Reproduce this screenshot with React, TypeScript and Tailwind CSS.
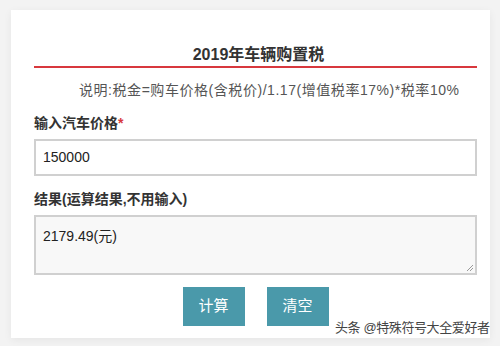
import React from "react";

export default function App() {
  const cjk = { fontFamily: '"Liberation Sans", "Noto Sans CJK SC", sans-serif' };
  return (
    <div className="relative w-[500px] h-[346px] overflow-hidden bg-[#f3f3f3] pt-[10px] pl-[11px] pr-[10px]" style={cjk}>
      <div className="w-[479px] h-[328px] bg-white shadow-[0_2px_8px_rgba(0,0,0,0.06)] pl-[23px] pr-[13px] pt-[35px]">
        <div className="border-b-2 border-[#d8383d] pb-[1px]">
          <div className="h-[20px] leading-[20px] text-center text-[16px] font-bold text-[#333] pl-[6px]">2019年车辆购置税</div>
        </div>
        <div className="mt-[12px] h-[20px] leading-[20px] pl-[45px] text-[14px] text-[#555] whitespace-nowrap tracking-[0.55px]">
          说明:税金=购车价格(含税价)/1.17(增值税率17%)*税率10%
        </div>
        <div className="mt-[13px] h-[20px] leading-[20px] text-[14px] font-bold text-[#333]">
          输入汽车价格<span className="text-[#d8383d]">*</span>
        </div>
        <div className="mt-[6px] h-[37px] border-2 border-[#d0d0d0] bg-white flex items-center pl-[7px] text-[14px] text-[#222]">
          150000
        </div>
        <div className="mt-[13px] h-[20px] leading-[20px] text-[14px] font-bold text-[#333]">
          结果(运算结果,不用输入)
        </div>
        <div className="relative mt-[6px] h-[60px] border-2 border-[#d0d0d0] bg-[#f8f8f8] pl-[7px] pt-[9px] text-[14px] leading-[20px] text-[#222]">
          2179.49(元)
          <svg className="absolute right-[1px] bottom-[1px]" width="8" height="8" viewBox="0 0 8 8">
            <path d="M7 1 L1 7 M7 4 L4 7" stroke="#999" strokeWidth="1" />
          </svg>
        </div>
        <div className="mt-[12px] flex justify-center gap-[22px]">
          <div className="w-[62px] h-[39px] bg-[#4a99aa] text-white text-[15px] flex items-center justify-center">计算</div>
          <div className="w-[62px] h-[39px] bg-[#4a99aa] text-white text-[15px] flex items-center justify-center">清空</div>
        </div>
      </div>
      <div className="absolute left-[335px] top-[319px] text-[13px] leading-[18px] text-[#444] whitespace-nowrap tracking-[-0.4px]">
        头条 @特殊符号大全爱好者
      </div>
    </div>
  );
}
